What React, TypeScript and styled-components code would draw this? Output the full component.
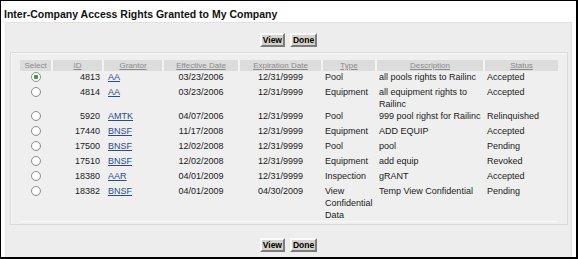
import React from 'react'
import styled, { createGlobalStyle } from 'styled-components'

const GlobalStyle = createGlobalStyle`
    html, body {
        margin: 0;
        padding: 0;
        background: #ffffff;
    }
    body {
        font-family: "Liberation Sans", Arial, sans-serif;
    }
`

const Frame = styled.div`
    width: 578px;
    height: 259px;
    box-sizing: border-box;
    border: 1px solid #000;
    border-right-width: 2px;
    border-bottom-width: 2px;
    display: flex;
    flex-direction: column;
    background: #fff;
    overflow: hidden;
`

const Title = styled.h1`
    margin: 7px 0 1px 3px;
    font-size: 10.5px;
    line-height: 13px;
    font-weight: bold;
    color: #111;
`

const Panel = styled.div`
    flex: 1;
    margin: 0 4px 0 4px;
    background: #ededed;
    border: 1px solid #e2e2e2;
    border-bottom: none;
    display: flex;
    flex-direction: column;
`

const ButtonBar = styled.div<{ $top: number }>`
    display: flex;
    justify-content: center;
    gap: 5px;
    margin-top: ${p => p.$top}px;
`

const Button = styled.button`
    height: 14px;
    box-sizing: border-box;
    padding: 0 1px;
    font-family: "Liberation Sans", Arial, sans-serif;
    font-size: 8.5px;
    line-height: 10px;
    font-weight: bold;
    color: #000;
    background: #d6d3cc;
    border: 2px solid;
    border-color: #fafafa #7c7c7c #7c7c7c #fafafa;
    cursor: pointer;
`

const Inner = styled.div`
    margin: 5px 3px 0 4px;
    padding: 7px 9px 2px 9px;
    border: 1px solid #dadada;
    box-shadow: inset 1px 1px 0 #f8f8f8;
    background: #efefef;
`

const Table = styled.table`
    width: 538px;
    table-layout: fixed;
    border-collapse: collapse;
    font-size: 9px;
    line-height: 12px;
    color: #1a1a1a;
    border-bottom: 1px solid #f7f7f7;
`

const Col = styled.col<{ $w: number }>`
    width: ${p => p.$w}px;
`

const Head = styled.th<{ $link?: boolean }>`
    height: 11px;
    padding: 0;
    font-size: 8px;
    line-height: 11px;
    font-weight: normal;
    color: #8a8a8a;
    text-align: center;
    background: #dcdcdc;
    border-right: 2px solid #f3f3f3;
    text-decoration: ${p => (p.$link ? 'underline' : 'none')};
    &:last-child {
        border-right: none;
    }
`

const Cell = styled.td<{ $align?: string; $pad?: number }>`
    height: 15px;
    box-sizing: border-box;
    padding: 0 3px 0 ${p => p.$pad ?? 3}px;
    vertical-align: top;
    text-align: ${p => p.$align ?? 'left'};
    overflow: hidden;
`

const Radio = styled.input.attrs({ type: 'radio', name: 'sel' })`
    appearance: none;
    display: block;
    width: 10px;
    height: 10px;
    margin: 1px auto 0;
    box-sizing: border-box;
    border: 1px solid #8d8d8d;
    border-radius: 50%;
    background: radial-gradient(circle at 40% 40%, #ffffff 40%, #e6e6e6 100%);
    &:checked {
        background: radial-gradient(circle, #3d9a3d 0 2px, #ffffff 2.5px);
    }
`

const Link = styled.a`
    color: #2a4b8d;
    text-decoration: underline;
`

const rows = [
    { id: 4813, grantor: 'AA', eff: '03/23/2006', exp: '12/31/9999', type: 'Pool', desc: 'all pools rights to Railinc', status: 'Accepted' },
    { id: 4814, grantor: 'AA', eff: '03/23/2006', exp: '12/31/9999', type: 'Equipment', desc: 'all equipment rights to Railinc', status: 'Accepted' },
    { id: 5920, grantor: 'AMTK', eff: '04/07/2006', exp: '12/31/9999', type: 'Pool', desc: '999 pool righst for Railinc', status: 'Relinquished' },
    { id: 17440, grantor: 'BNSF', eff: '11/17/2008', exp: '12/31/9999', type: 'Equipment', desc: 'ADD EQUIP', status: 'Accepted' },
    { id: 17500, grantor: 'BNSF', eff: '12/02/2008', exp: '12/31/9999', type: 'Pool', desc: 'pool', status: 'Pending' },
    { id: 17510, grantor: 'BNSF', eff: '12/02/2008', exp: '12/31/9999', type: 'Equipment', desc: 'add equip', status: 'Revoked' },
    { id: 18380, grantor: 'AAR', eff: '04/01/2009', exp: '12/31/9999', type: 'Inspection', desc: 'gRANT', status: 'Accepted' },
    { id: 18382, grantor: 'BNSF', eff: '04/01/2009', exp: '04/30/2009', type: 'View Confidential Data', desc: 'Temp View Confidential', status: 'Pending' },
]

const Buttons = ({ top }: { top: number }) => (
    <ButtonBar $top={top}>
        <Button>View</Button>
        <Button>Done</Button>
    </ButtonBar>
)

const App = () => {
    return (
        <Frame>
            <GlobalStyle />
            <Title>Inter-Company Access Rights Granted to My Company</Title>
            <Panel>
                <Buttons top={10} />
                <Inner>
                    <Table>
                        <colgroup>
                            <Col $w={32} />
                            <Col $w={51} />
                            <Col $w={60} />
                            <Col $w={76} />
                            <Col $w={83} />
                            <Col $w={54} />
                            <Col $w={108} />
                            <Col $w={74} />
                        </colgroup>
                        <thead>
                            <tr>
                                <Head>Select</Head>
                                <Head $link>ID</Head>
                                <Head $link>Grantor</Head>
                                <Head $link>Effective Date</Head>
                                <Head $link>Expiration Date</Head>
                                <Head $link>Type</Head>
                                <Head $link>Description</Head>
                                <Head $link>Status</Head>
                            </tr>
                        </thead>
                        <tbody>
                            {rows.map((r, i) => (
                                <tr key={r.id}>
                                    <Cell $align="center" $pad={3}>
                                        <Radio defaultChecked={i === 0} />
                                    </Cell>
                                    <Cell $align="right">{r.id}</Cell>
                                    <Cell $pad={5}>
                                        <Link href="#">{r.grantor}</Link>
                                    </Cell>
                                    <Cell $align="center">{r.eff}</Cell>
                                    <Cell $align="center">{r.exp}</Cell>
                                    <Cell>{r.type}</Cell>
                                    <Cell>{r.desc}</Cell>
                                    <Cell>{r.status}</Cell>
                                </tr>
                            ))}
                        </tbody>
                    </Table>
                </Inner>
                <Buttons top={13} />
            </Panel>
        </Frame>
    )
}

export default App
